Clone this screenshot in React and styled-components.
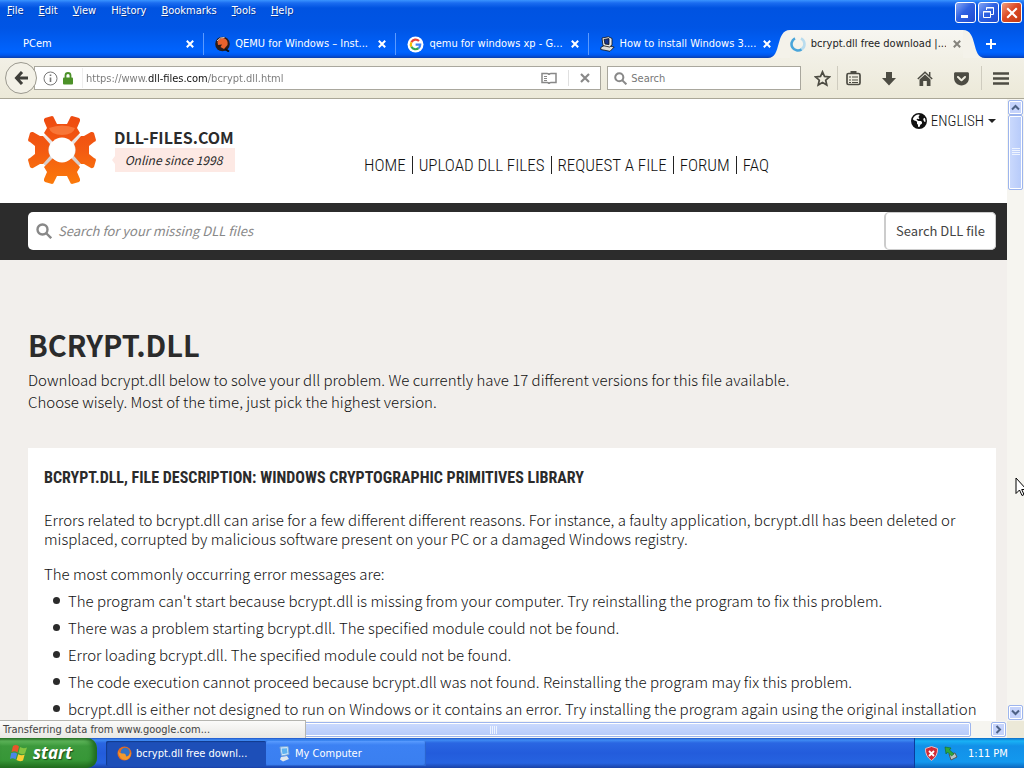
import React from "react";
import styled, { createGlobalStyle, css } from "styled-components";
import { FaEarthAmericas, FaGetPocket } from "react-icons/fa6";

const ui = '"DejaVu Sans Condensed", "DejaVu Sans", sans-serif';
const body = '"Noto Sans CJK SC", "Noto Sans", sans-serif';
const narrow = '"Roboto Condensed", "Liberation Sans Narrow", Roboto, sans-serif';

const GlobalStyle = createGlobalStyle`
  * { box-sizing: border-box; }
  body { margin: 0; background: #f2efec; }
  button, input { font: inherit; color: inherit; }
  button { border: 0; padding: 0; background: none; cursor: pointer; }
  input { border: 0; padding: 0; background: none; outline: 0; min-width: 0; }
  ul, h1, h2, p { margin: 0; padding: 0; }
  svg { display: block; flex: none; }
`;

const Desktop = styled.div`
  height: 100vh;
  display: flex;
  flex-direction: column;
  overflow: hidden;
  font-family: ${ui};
  font-size: 11px;
  position: relative;
`;

/* window frame */
const Frame = styled.header`
  background: linear-gradient(#3a94ff 0, #1a6cf0 3px, #0053e1 8px, #0055e5 28px, #0064ff 52px, #0058ee 55px, #0a3fb0 58px);
  color: #fff;
  height: 58px;
  flex: none;
  display: flex;
  flex-direction: column;
  justify-content: space-between;
`;
const TitleRow = styled.div`
  display: flex;
  justify-content: space-between;
  align-items: flex-start;
`;
const Menu = styled.nav`
  display: flex;
  gap: 15px;
  padding: 3px 0 0 7px;
  line-height: 15px;
  text-shadow: 1px 1px 0 #0a3a9c;
  u { text-underline-offset: 1px; }
`;
const WindowButtons = styled.div`
  display: flex;
  gap: 2px;
  padding: 2px 2px 0 0;
`;
const WindowButton = styled.button`
  width: 21px;
  height: 21px;
  border: 1px solid #fff;
  border-radius: 3px;
  display: grid;
  place-items: center;
  background: ${(p) =>
    p.$close
      ? "linear-gradient(135deg, #f0a080, #dd4a25 45%, #c23a12)"
      : "linear-gradient(135deg, #86a6f5, #2f62e2 45%, #1f4bd0)"};
`;
const TabStrip = styled.div`
  display: flex;
  align-items: stretch;
  height: 28px;
  padding-left: 15px;
`;
const Tab = styled.div`
  flex: 1 1 0;
  min-width: 0;
  display: flex;
  align-items: center;
  gap: 5px;
  padding: 0 8px 0 ${(p) => (p.$plain ? 8 : 11)}px;
  position: relative;
  ${(p) => p.$divided && css`
    &::after {
      content: "";
      position: absolute;
      right: 0;
      top: 3px;
      bottom: 3px;
      width: 1px;
      background: #5b9aff;
    }
  `}
  ${(p) => p.$active && css`
    color: #222;
    background: linear-gradient(#f7f6f1, #f2f0e6);
    margin: 0 9px 0 9px;
    padding: 0;
  `}
`;
const TabLabel = styled.button`
  flex: 1;
  min-width: 0;
  text-align: left;
  white-space: nowrap;
  overflow: hidden;
  line-height: 16px;
`;
const TabClose = styled.button`
  width: 12px;
  height: 16px;
  display: grid;
  place-items: center;
  ${(p) => p.$dim && "color: #85837c;"}
`;
const TabCurve = styled.svg`
  position: absolute;
  top: 0;
  ${(p) => (p.$right ? "left: 100%;" : "right: 100%;")}
`;
const NewTab = styled.button`
  width: 34px;
  margin: 0 16px 0 2px;
  display: grid;
  place-items: center;
`;

/* navigation bar */
const Toolbar = styled.div`
  height: 41px;
  flex: none;
  background: linear-gradient(#f2f0e6, #ece9d8);
  border-bottom: 1px solid #aaa797;
  display: flex;
  align-items: center;
  padding: 0 5px;
  color: #4d4c43;
`;
const BackButton = styled.button`
  width: 32px;
  height: 32px;
  border: 1px solid #9b998f;
  border-radius: 50%;
  background: #f3f1e7;
  display: grid;
  place-items: center;
  flex: none;
  z-index: 1;
`;
const Field = styled.form`
  height: 24px;
  display: flex;
  align-items: center;
  background: #fff;
  border: 1px solid #a9a79d;
`;
const AddressField = styled(Field)`
  flex: 3;
  margin-left: -3px;
  padding-left: 8px;
  gap: 5px;
`;
const Address = styled.input`
  flex: 1;
  margin-left: 4px;
  padding-left: 3px;
  height: 20px;
  border-left: 1px solid #eee;
  color: transparent;
  caret-color: #222;
  background: linear-gradient(90deg, #777 65px, #111 65px 125px, #777 125px);
  background-clip: text;
  -webkit-background-clip: text;
`;
const FieldButton = styled.button`
  width: ${(p) => p.$width}px;
  height: 16px;
  display: grid;
  place-items: center;
  color: #888;
  ${(p) => p.$divided && "border-left: 1px solid #e0e0e0;"}
`;
const SearchField = styled(Field)`
  flex: 1;
  margin-left: 6px;
  padding-left: 6px;
  gap: 4px;
  input { flex: 1; }
  input::placeholder { color: #777; opacity: 1; }
`;
const Tools = styled.div`
  display: flex;
  align-items: center;
  margin-left: 6px;
`;
const Tool = styled.button`
  width: ${(p) => p.$width || 36}px;
  height: 24px;
  display: grid;
  place-items: center;
  ${(p) => p.$divided && "border-left: 1px solid #cfccbf;"}
`;

/* viewport */
const Viewport = styled.div`
  flex: 1;
  min-height: 0;
  display: grid;
  grid-template-columns: minmax(0, 1fr) 17px;
  grid-template-rows: minmax(0, 1fr) 17px;
`;
const Page = styled.main`
  overflow: hidden;
  background: #f2efec;
  color: #111;
  font-family: ${body};
  font-size: 15px;
  font-weight: 300;
`;
const SiteHeader = styled.header`
  background: #fff;
  height: 104px;
  padding: 0 11px 0 27px;
  display: flex;
  align-items: flex-start;
`;
const Brand = styled.a`
  display: flex;
  gap: 15px;
  padding-top: 16px;
  color: #2b2b2b;
  text-decoration: none;
`;
const BrandText = styled.span`
  display: flex;
  flex-direction: column;
  padding-top: 12px;
`;
const BrandName = styled.strong`
  font-size: 16px;
  font-weight: 700;
  line-height: 21px;
  padding-left: 2px;
`;
const Tagline = styled.em`
  background: #fde9e4;
  font-size: 12px;
  font-weight: 400;
  line-height: 24px;
  width: 123px;
  text-align: center;
  clip-path: polygon(3px 0, 100% 0, 100% 100%, 3px 100%, 3px 16px, 0 12px, 3px 8px);
`;
const SiteNav = styled.nav`
  font-family: ${narrow};
  font-size: 17px;
  line-height: 18px;
  display: flex;
  margin: 57px 0 0 123px;
  a { color: #111; text-decoration: none; padding: 0 6px; white-space: nowrap; }
  a + a { border-left: 1px solid #222; }
`;
const Language = styled.button`
  font-family: ${narrow};
  font-size: 15px;
  line-height: 18px;
  margin: 13px 0 0 auto;
  display: flex;
  align-items: center;
  gap: 4px;
`;
const Caret = styled.span`
  border: 4px solid transparent;
  border-top-color: #222;
  border-bottom: 0;
`;
const SearchBand = styled.div`
  background: #2c2c2c;
  padding: 9px 11px 10px 28px;
`;
const DllSearch = styled.form`
  display: flex;
  align-items: center;
  background: #fff;
  border-radius: 5px;
  height: 38px;
  padding-left: 8px;
  gap: 6px;
  font-size: 13px;
  font-weight: 400;
  input { flex: 1; font-style: italic; height: 36px; padding-bottom: 2px; }
  input::placeholder { color: #888; opacity: 1; }
`;
const DllButton = styled.button`
  width: 112px;
  height: 100%;
  border: 1px solid #ccc;
  border-left-width: 2px;
  border-radius: 5px;
  padding-bottom: 2px;
  color: #444;
`;
const Intro = styled.section`
  padding: 66px 28px 35px;
  line-height: 22px;
  h1 { font-size: 29px; line-height: 36px; margin-bottom: 7px; color: #2b2b2b; }
`;
const Card = styled.section`
  background: #fff;
  margin: 0 11px 0 28px;
  padding: 20px 16px;
  line-height: 19px;
  p + p { margin-top: 16px; }
  h2 { font-family: ${narrow}; font-size: 16px; line-height: 20px; margin-bottom: 22px; color: #2b2b2b; }
`;
const Messages = styled.ul`
  list-style: none;
  margin-top: 4px;
  line-height: 27px;
  white-space: nowrap;
  li { display: flex; align-items: center; gap: 8px; padding-left: 9px; }
  li::before { content: ""; width: 7px; height: 7px; border-radius: 50%; background: #2b2b2b; flex: none; }
`;

/* scroll bars */
const Scrollbar = styled.div`
  display: flex;
  flex-direction: ${(p) => (p.$vertical ? "column" : "row")};
  background: #f6f5f0;
  padding: 1px;
`;
const barSkin = css`
  border: 1px solid #9db5ee;
  border-radius: 2px;
  box-shadow: inset 0 0 0 1px #fff;
  display: grid;
  place-items: center;
`;
const ScrollArrow = styled.button`
  ${barSkin}
  width: 15px;
  height: 15px;
  flex: none;
  background: #c5d3fb;
`;
const Thumb = styled.div`
  ${barSkin}
  background: linear-gradient(${(p) => (p.$vertical ? "90deg" : "180deg")}, #cbdafd, #b6cafa);
  flex: ${(p) => p.$share} 1 0;
`;
const Track = styled.div`
  flex: ${(p) => p.$share} 1 0;
`;
const Corner = styled.div`
  background: #ece9d8;
`;
const Status = styled.div`
  position: absolute;
  left: 0;
  bottom: 30px;
  width: 306px;
  height: 18px;
  padding-left: 3px;
  line-height: 18px;
  color: #444;
  background: linear-gradient(#fbfbfa, #e9e8e4);
  border: solid #b5b5b0;
  border-width: 1px 1px 0 0;
`;

/* taskbar */
const Taskbar = styled.footer`
  height: 30px;
  flex: none;
  display: flex;
  align-items: stretch;
  color: #fff;
  background: linear-gradient(#1f55c8, #3f8cf3 2px, #2a66e2 5px, #235cdc 15px, #2663e0 25px, #1941a5);
`;
const Start = styled.button`
  width: 97px;
  display: flex;
  align-items: center;
  gap: 5px;
  padding-left: 10px;
  border-radius: 0 10px 10px 0;
  background: linear-gradient(#2f7a2f, #5fb75b 3px, #3c993c 8px, #379737 22px, #23701f);
  box-shadow: inset -4px 0 5px #1f6a1f;
  font: italic bold 17px/24px "Open Sans", sans-serif;
  text-shadow: 1px 1px 1px #1a4a1a;
  margin-right: 9px;
`;
const Task = styled.button`
  width: 160px;
  margin: 3px 0 2px;
  padding-left: 11px;
  display: flex;
  align-items: center;
  gap: 4px;
  border-radius: 2px;
  white-space: nowrap;
  background: ${(p) => (p.$active ? "#1d4fb8" : "linear-gradient(#5a9cff, #3c81f3 4px, #3a7ff0)")};
  box-shadow: ${(p) => (p.$active ? "inset 1px 1px 1px #123a8c" : "inset -1px -1px 1px #2a62cc")};
`;
const Tray = styled.div`
  width: 110px;
  margin-left: auto;
  padding-left: 9px;
  display: flex;
  align-items: center;
  gap: 4px;
  border-left: 1px solid #0a3c9c;
  background: linear-gradient(#0c6cc8, #19b2f5 3px, #1290e8 8px, #1398ee 24px, #0c66bd);
  time { margin-left: 6px; }
`;

const Cursor = styled.svg`
  position: absolute;
  right: -3px;
  top: 477px;
`;

const Cross = ({ size = 8, width = 2 }) => (
  <svg width={size} height={size} viewBox="0 0 8 8" stroke="currentColor" strokeWidth={width}>
    <path d="M.8 .8 7.2 7.2M7.2 .8 .8 7.2" />
  </svg>
);

const Lens = ({ size, width = 2.5 }) => (
  <svg width={size} height={size} viewBox="0 0 16 16" fill="none" stroke="#888" strokeWidth={width}>
    <circle cx="6.5" cy="6.5" r="5" />
    <path d="m10 10 5.2 5.2" />
  </svg>
);

const QemuIcon = () => (
  <svg width="15" height="16" viewBox="0 0 15 16">
    <circle cx="7.5" cy="8" r="7.3" fill="#281c1c" />
    <path d="M2.500 6Q4 1.500 9 2.200 13.500 4 12.500 9L9 13 5.500 11 7 8.500 3 9Z" fill="#e8622d" />
    <path d="M2 5Q5 .8 9.500 1.500" stroke="#d8ccc8" fill="none" />
    <path d="m10 13 4 2.5" stroke="#111" strokeWidth="2" />
  </svg>
);
const GoogleIcon = () => (
  <svg width="17" height="17" viewBox="0 0 17 17" fill="none" strokeWidth="2.2">
    <circle cx="8.5" cy="8.5" r="8" fill="#fff" />
    <path d="M12 5A4.8 4.8 0 0 0 4.4 6.2" stroke="#ea4335" />
    <path d="M4.4 6.2a4.8 4.8 0 0 0 0 4.6" stroke="#fbbc05" />
    <path d="M4.4 10.8A4.8 4.8 0 0 0 11.6 12.2" stroke="#34a853" />
    <path d="M11.6 12.2A4.8 4.8 0 0 0 13.2 8.7H8.6" stroke="#4285f4" />
  </svg>
);
const PcIcon = () => (
  <svg width="15" height="16" viewBox="0 0 15 16" stroke="#111" strokeWidth=".8">
    <path d="m.8 11.500 4-2.500 9.400 2-4.200 4.300L.8 13.500Z" fill="#dcdcdc" />
    <path d="M2 2 8.500.8 12 2.500V9L9.500 11 3 9.600Z" fill="#ececec" />
    <path d="m4 3.400 5-.8v6l-4-.6Z" fill="#14338c" />
  </svg>
);
const Spinner = () => (
  <svg width="16" height="16" viewBox="0 0 16 16" fill="none" strokeWidth="2.6">
    <path d="M11 2.300A6.400 6.400 0 0 1 11.500 13.400" stroke="#b9dcee" />
    <path d="M5 2.4A6.4 6.4 0 1 0 11.5 13.4" stroke="#49a5da" />
  </svg>
);

const Gear = () => (
  <svg width="70" height="70" viewBox="-35 -35 70 70">
    <defs>
      <linearGradient id="ember" x1="0" y1="-34" x2="0" y2="34" gradientUnits="userSpaceOnUse">
        <stop offset="0" stopColor="#ee4a10" />
        <stop offset=".5" stopColor="#f35a12" />
        <stop offset="1" stopColor="#fb7a0a" />
      </linearGradient>
      <linearGradient id="band" x1="0" y1="-20" x2="0" y2="20" gradientUnits="userSpaceOnUse">
        <stop offset="0" stopColor="#f4efee" />
        <stop offset="1" stopColor="#cfc6c4" />
      </linearGradient>
    </defs>
    <circle r="18" fill="none" stroke="url(#band)" strokeWidth="10" />
    <g fill="url(#ember)">
      <path d="M-9-8-18-17-15-22-18-29Q-18.500-31-17-32L-10-34Q-8.500-34-8-32L-5-26H5L8-32Q8.500-34 10-34L17-32Q18.500-31 18-29L15-22 18-17 9-8A12.500 12.500 0 0 0-9-8Z" />
      <path d="M-9 8-18 17-15 22-18 29Q-18.500 31-17 32L-10 34Q-8.500 34-8 32L-5 26H5L8 32Q8.500 34 10 34L17 32Q18.500 31 18 29L15 22 18 17 9 8A12.500 12.500 0 0 1-9 8Z" />
      <path d="M-12-6-19-14-22-14-29-18Q-31-18.500-32-17L-34-10Q-34-8.500-32-8L-27-4V4L-32 8Q-34 8.500-34 10L-32 17Q-31 18.500-29 18L-22 14-19 14-12 6A12.500 12.500 0 0 1-12-6Z" />
      <path d="M12-6 19-14 22-14 29-18Q31-18.500 32-17L34-10Q34-8.500 32-8L27-4V4L32 8Q34 8.500 34 10L32 17Q31 18.500 29 18L22 14 19 14 12 6A12.500 12.500 0 0 0 12-6Z" />
    </g>
    <path d="M-13-22Q0-27 13-22 11-15 0-15-11-15-13-22Z" fill="#ff9a5e" opacity=".5" />
    <circle r="12.500" fill="#fff" />
  </svg>
);

const tabs = [
  { label: "PCem", divided: true },
  { label: "QEMU for Windows – Inst...", icon: <QemuIcon />, divided: true },
  { label: "qemu for windows xp - G...", icon: <GoogleIcon />, divided: true },
  { label: "How to install Windows 3....", icon: <PcIcon /> },
];

const messages = [
  "The program can't start because bcrypt.dll is missing from your computer. Try reinstalling the program to fix this problem.",
  "There was a problem starting bcrypt.dll. The specified module could not be found.",
  "Error loading bcrypt.dll. The specified module could not be found.",
  "The code execution cannot proceed because bcrypt.dll was not found. Reinstalling the program may fix this problem.",
  "bcrypt.dll is either not designed to run on Windows or it contains an error. Try installing the program again using the original installation",
];

const Chevron = ({ turn }) => (
  <svg width="9" height="9" viewBox="0 0 9 9" fill="none" stroke="#4d6185" strokeWidth="2">
    <path d="M1 6.500 4.500 3 8 6.500" transform={`rotate(${turn} 4.500 4.500)`} />
  </svg>
);
const Grip = ({ turn }) => (
  <svg width="8" height="8" viewBox="0 0 8 8" stroke="#eef4ff">
    <path d="M.5 0V8M2.500 0V8M4.500 0V8M6.500 0V8" transform={`rotate(${turn} 4 4)`} />
  </svg>
);

export default function App() {
  return (
    <Desktop>
      <GlobalStyle />
      <Frame>
        <TitleRow>
          <Menu>
            <span><u>F</u>ile</span>
            <span><u>E</u>dit</span>
            <span><u>V</u>iew</span>
            <span>Hi<u>s</u>tory</span>
            <span><u>B</u>ookmarks</span>
            <span><u>T</u>ools</span>
            <span><u>H</u>elp</span>
          </Menu>
          <WindowButtons>
            <WindowButton aria-label="Minimize">
              <svg width="13" height="13"><path d="M2 9h7v3H2z" fill="#fff" /></svg>
            </WindowButton>
            <WindowButton aria-label="Restore">
              <svg width="13" height="13" fill="none" stroke="#fff">
                <path d="M4.500 4V1.500h7v7H9M4 2h8" />
                <path d="M1.500 5.500h7v6h-7zM1 6h8" />
              </svg>
            </WindowButton>
            <WindowButton $close aria-label="Close"><Cross size={12} width={1.4} /></WindowButton>
          </WindowButtons>
        </TitleRow>
        <TabStrip>
          {tabs.map((t) => (
            <Tab key={t.label} $divided={t.divided} $plain={!t.icon}>
              {t.icon}
              <TabLabel>{t.label}</TabLabel>
              <TabClose aria-label={`Close ${t.label}`}><Cross /></TabClose>
            </Tab>
          ))}
          <Tab $active>
            <TabCurve width="22" height="28"><path d="M22 0C7 0 14 28 0 28H22Z" fill="#f4f2ea" /></TabCurve>
            <Spinner />
            <TabLabel>bcrypt.dll free download |...</TabLabel>
            <TabClose $dim aria-label="Close tab"><Cross /></TabClose>
            <TabCurve $right width="22" height="28"><path d="M0 0C15 0 8 28 22 28H0Z" fill="#f4f2ea" /></TabCurve>
          </Tab>
          <NewTab aria-label="New tab">
            <svg width="10" height="10" stroke="#fff" strokeWidth="2"><path d="M5 0V10M0 5H10" /></svg>
          </NewTab>
        </TabStrip>
      </Frame>

      <Toolbar>
        <BackButton aria-label="Back">
          <svg width="15" height="14" viewBox="0 0 15 14" fill="none" stroke="#3f3f3a" strokeWidth="3">
            <path d="M8 1 2.500 7 8 13M2.500 7H14" />
          </svg>
        </BackButton>
        <AddressField onSubmit={(e) => e.preventDefault()}>
          <svg width="15" height="15" viewBox="0 0 15 15" fill="none" stroke="#777">
            <circle cx="7.500" cy="7.500" r="6.500" />
            <path d="M7.500 6.500V11M7.500 3.500V5" strokeWidth="1.600" />
          </svg>
          <svg width="10" height="13" viewBox="0 0 10 13">
            <path d="M2.500 6V3.500a2.500 2.500 0 0 1 5 0V6" fill="none" stroke="#4c9128" strokeWidth="1.800" />
            <rect y="5.500" width="10" height="7" rx="1" fill="#4c9128" />
          </svg>
          <Address aria-label="Address" defaultValue="https://www.dll-files.com/bcrypt.dll.html" />
          <FieldButton type="button" $width={28} aria-label="Reader view">
            <svg width="16" height="13" viewBox="0 0 16 13" fill="none" stroke="currentColor" strokeWidth="1.500">
              <path d="M1 1.500H6Q8 1.500 8 3 8 1.500 10 1.500H15V10.500H10Q8 10.500 8 12 8 10.500 6 10.500H1Z" />
              <path d="M3 4.500H6M3 6.500H6M3 8.500H6" strokeWidth="1" />
            </svg>
          </FieldButton>
          <FieldButton type="button" $width={32} $divided aria-label="Stop"><Cross size={10} width={1.7} /></FieldButton>
        </AddressField>
        <SearchField onSubmit={(e) => e.preventDefault()}>
          <Lens size={13} />
          <input aria-label="Search" placeholder="Search" />
        </SearchField>
        <Tools>
          <Tool $width={30} aria-label="Bookmark">
            <svg width="17" height="17" viewBox="0 0 17 17" fill="none" stroke="currentColor" strokeWidth="1.700">
              <path d="m8.500 1.800 2 4.600 5 .5-3.800 3.300 1.100 4.900-4.300-2.600-4.300 2.600 1.100-4.900L1.500 6.900l5-.5Z" />
            </svg>
          </Tool>
          <Tool $width={32} $divided aria-label="Bookmarks list">
            <svg width="15" height="16" viewBox="0 0 15 16" fill="none" stroke="currentColor" strokeWidth="1.700">
              <rect x="1" y="3.500" width="13" height="11" rx="1.500" />
              <path d="M4.500 2.500h6" strokeWidth="3" />
              <path d="M3 7h2M3 10h2M3 12.500h2M6 7h6M6 10h6M6 12.500h6" strokeWidth="1.200" />
            </svg>
          </Tool>
          <Tool $width={40} aria-label="Downloads">
            <svg width="14" height="15" viewBox="0 0 14 15" fill="currentColor"><path d="M4 1H10V7H14L7 14.500 0 7H4Z" /></svg>
          </Tool>
          <Tool $width={32} aria-label="Home">
            <svg width="16" height="15" viewBox="0 0 16 15" fill="currentColor">
              <path d="M8 3.600 13.500 8.500V15H9.800V10H6.200V15H2.500V8.500Z" />
              <path d="M.8 8 8 1.300 15.200 8M12.700 1V5" fill="none" stroke="currentColor" strokeWidth="1.500" />
            </svg>
          </Tool>
          <Tool $width={40} aria-label="Pocket"><FaGetPocket size={17} /></Tool>
          <Tool $width={38} $divided aria-label="Open menu">
            <svg width="16" height="13" stroke="currentColor" strokeWidth="2.600"><path d="M0 1.500H16M0 6.500H16M0 11.500H16" /></svg>
          </Tool>
        </Tools>
      </Toolbar>

      <Viewport>
        <Page>
          <SiteHeader>
            <Brand href="#home">
              <Gear />
              <BrandText>
                <BrandName>DLL-FILES.COM</BrandName>
                <Tagline>Online since 1998</Tagline>
              </BrandText>
            </Brand>
            <SiteNav>
              <a href="#home">HOME</a>
              <a href="#upload">UPLOAD DLL FILES</a>
              <a href="#request">REQUEST A FILE</a>
              <a href="#forum">FORUM</a>
              <a href="#faq">FAQ</a>
            </SiteNav>
            <Language><FaEarthAmericas size={16} />ENGLISH<Caret /></Language>
          </SiteHeader>
          <SearchBand>
            <DllSearch onSubmit={(e) => e.preventDefault()}>
              <Lens size={16} width={2.4} />
              <input aria-label="Search for your missing DLL files" placeholder="Search for your missing DLL files" />
              <DllButton>Search DLL file</DllButton>
            </DllSearch>
          </SearchBand>
          <Intro>
            <h1>BCRYPT.DLL</h1>
            <p>
              Download bcrypt.dll below to solve your dll problem. We currently have 17 different versions for this file available.
              <br />
              Choose wisely. Most of the time, just pick the highest version.
            </p>
          </Intro>
          <Card>
            <h2>BCRYPT.DLL, FILE DESCRIPTION: WINDOWS CRYPTOGRAPHIC PRIMITIVES LIBRARY</h2>
            <p>
              Errors related to bcrypt.dll can arise for a few different different reasons. For instance, a faulty application, bcrypt.dll has been deleted or misplaced, corrupted by malicious software present on your PC or a damaged Windows registry.
            </p>
            <p>The most commonly occurring error messages are:</p>
            <Messages>
              {messages.map((m) => <li key={m}>{m}</li>)}
            </Messages>
          </Card>
        </Page>
        <Scrollbar $vertical>
          <ScrollArrow aria-label="Scroll up"><Chevron turn={0} /></ScrollArrow>
          <Thumb $vertical $share={73}><Grip turn={90} /></Thumb>
          <Track $share={517} />
          <ScrollArrow aria-label="Scroll down"><Chevron turn={180} /></ScrollArrow>
        </Scrollbar>
        <Scrollbar>
          <ScrollArrow aria-label="Scroll left"><Chevron turn={270} /></ScrollArrow>
          <Thumb $share={955}><Grip turn={0} /></Thumb>
          <Track $share={20} />
          <ScrollArrow aria-label="Scroll right"><Chevron turn={90} /></ScrollArrow>
        </Scrollbar>
        <Corner />
      </Viewport>
      <Status role="status">Transferring data from www.google.com...</Status>

      <Taskbar>
        <Start>
          <svg width="18" height="18" viewBox="0 0 18 18">
            <path d="M3 2Q6 0 9 2.500L7.500 8.500Q5 6.500 1.500 8Z" fill="#e8552b" />
            <path d="M10 3Q13 5 17 3.500L15 9.500Q12 11 8.500 9Z" fill="#83c441" />
            <path d="M1.200 9Q4.500 7.500 7.200 9.700L5.500 15.500Q3 13.500 0 15Z" fill="#4a86e8" />
            <path d="M8.200 10.200Q11.500 12 14.700 10.500L13 16.500Q9.500 18 6.500 16Z" fill="#f9cf33" />
          </svg>
          start
        </Start>
        <Task $active>
          <svg width="15" height="15" viewBox="0 0 15 15">
            <circle cx="7.500" cy="7.500" r="7" fill="#e66a1f" />
            <circle cx="8.200" cy="6.300" r="4.500" fill="#3272c4" />
            <path d="M1 5Q3 8 6 7.500T9 10.500Q12 11 13.500 6 14.500 12 9 14 2 14 1 5Z" fill="#f29a2e" />
          </svg>
          bcrypt.dll free downl...
        </Task>
        <Task>
          <svg width="14" height="16" viewBox="0 0 14 16">
            <path d="m3 1 8-.5 1 8-7.500 1.500Z" fill="#d9ecfb" stroke="#7aa8d8" />
            <path d="m4.500 2.500 5.500-.3.600 5-5.100 1Z" fill="#5fb2f0" />
            <path d="m4 11 6-1 2 3-6 2.500-3-2Z" fill="#dfe7ee" />
          </svg>
          My Computer
        </Task>
        <Tray>
          <svg width="15" height="15" viewBox="0 0 15 15">
            <path d="M7.500.5 13.500 2.500Q14 10 7.500 14.500 1 10 1.500 2.500Z" fill="#d02a35" stroke="#e9b9c0" />
            <path d="m5 5 5 5M10 5 5 10" stroke="#fff" strokeWidth="1.800" />
          </svg>
          <svg width="15" height="15" viewBox="0 0 15 15">
            <path d="m6 8 6-1 2 4-6 3Z" fill="#b9c4c4" stroke="#555" />
            <path d="M2 1 8 2 6.500 4 11 8 8.500 10 4.500 6 3 8Z" fill="#2fa83a" stroke="#176a22" strokeWidth=".6" />
          </svg>
          <time>1:11 PM</time>
        </Tray>
      </Taskbar>
      <Cursor width="12" height="20" viewBox="0 0 12 20">
        <path d="M1 1V16.500L4.500 13 7 18.500 9 17.500 6.700 12.500H11.500Z" fill="#fff" stroke="#000" />
      </Cursor>
    </Desktop>
  );
}
